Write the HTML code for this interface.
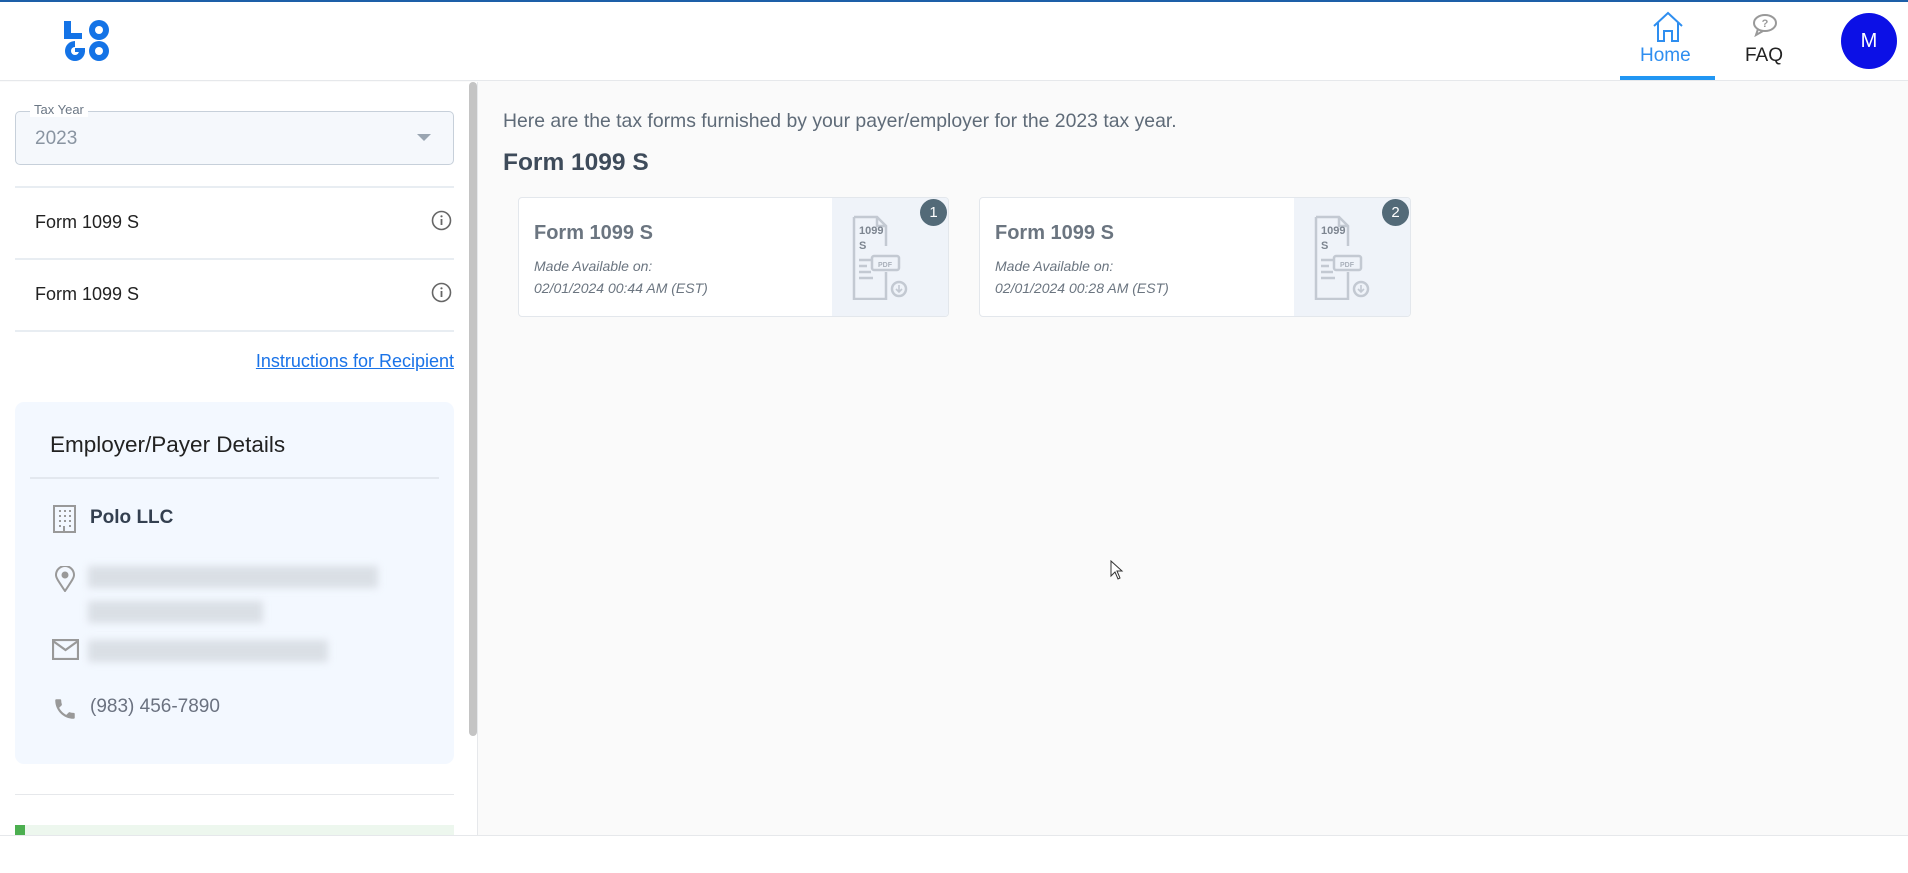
<!DOCTYPE html>
<html><head><meta charset="utf-8"><style>
*{box-sizing:border-box;margin:0;padding:0}
body{width:1908px;height:873px;overflow:hidden;background:#fafafa;font-family:"Liberation Sans",sans-serif;position:relative}
.abs{position:absolute}
</style></head><body>
<div class="abs" style="left:0;top:0;width:1908px;height:2px;background:#1d5fa8"></div>
<div class="abs" style="left:0;top:2px;width:1908px;height:79px;background:#fff;border-bottom:1px solid #e6e8eb"></div>
<svg class="abs" style="left:63px;top:20px" width="48" height="42" viewBox="0 0 48 42" fill="#1473e6"><path d="M1 1H8V13H19V19H1Z"/><circle cx="36" cy="10" r="10"/><circle cx="36" cy="10" r="4" fill="#fff"/><circle cx="12" cy="31" r="10"/><circle cx="12" cy="31" r="4" fill="#fff"/><rect x="12" y="28" width="10" height="4"/><rect x="12" y="21" width="10" height="7" fill="#fff"/><circle cx="36" cy="31" r="10"/><circle cx="36" cy="31" r="4" fill="#fff"/></svg>
<svg class="abs" style="left:1651px;top:11px" width="34" height="32" viewBox="0 0 34 32" fill="none" stroke="#2e8ef0" stroke-width="2"><path d="M3 15 L17 2 L31 15 M7 12 V30 H13 V20 H21 V30 H27 V12"/></svg>
<div class="abs" style="left:1640px;top:45px;font-size:19px;color:#2e8ef0">Home</div>
<div class="abs" style="left:1620px;top:76px;width:95px;height:4px;background:#2196f3"></div>
<svg class="abs" style="left:1752px;top:13px" width="26" height="24" viewBox="0 0 26 24" fill="none" stroke="#999" stroke-width="2"><ellipse cx="13" cy="10" rx="11" ry="8"/><path d="M6 16 L4 22 L11 18"/><text x="13" y="14" font-size="11" font-weight="bold" fill="#999" stroke="none" text-anchor="middle" font-family="Liberation Sans">?</text></svg>
<div class="abs" style="left:1745px;top:45px;font-size:19px;color:#222">FAQ</div>
<div class="abs" style="left:1841px;top:13px;width:56px;height:56px;border-radius:50%;background:#0c10e6;color:#fff;font-size:20px;text-align:center;line-height:56px">M</div>

<div class="abs" style="left:0;top:82px;width:478px;height:753px;background:#fff;border-right:1px solid #e6e8eb"></div>
<div class="abs" style="left:469px;top:82px;width:8px;height:654px;background:#c4c4c4;border-radius:4px"></div>
<div class="abs" style="left:15px;top:111px;width:439px;height:54px;border:1px solid #c7d0da;border-radius:5px;background:#f5f8fc"></div>
<div class="abs" style="left:30px;top:102px;padding:0 4px;background:#fff;font-size:13px;color:#6b7785">Tax Year</div>
<div class="abs" style="left:35px;top:128px;font-size:19px;color:#8994a1">2023</div>
<div class="abs" style="left:417px;top:134px;border-left:7px solid transparent;border-right:7px solid transparent;border-top:7px solid #9aa5b1"></div>
<div class="abs" style="left:15px;top:186px;width:439px;height:2px;background:#e8edf2"></div>
<div class="abs" style="left:35px;top:212px;font-size:18px;color:#222">Form 1099 S</div>
<svg class="abs" style="left:431px;top:210px" width="21" height="21"><circle cx="10.5" cy="10.5" r="9" fill="none" stroke="#666" stroke-width="1.6"/><path d="M10.5 9v6" stroke="#666" stroke-width="1.8"/><circle cx="10.5" cy="6.3" r="1.1" fill="#666"/></svg>
<div class="abs" style="left:15px;top:258px;width:439px;height:2px;background:#e8edf2"></div>
<div class="abs" style="left:35px;top:284px;font-size:18px;color:#222">Form 1099 S</div>
<svg class="abs" style="left:431px;top:282px" width="21" height="21"><circle cx="10.5" cy="10.5" r="9" fill="none" stroke="#666" stroke-width="1.6"/><path d="M10.5 9v6" stroke="#666" stroke-width="1.8"/><circle cx="10.5" cy="6.3" r="1.1" fill="#666"/></svg>
<div class="abs" style="left:15px;top:330px;width:439px;height:2px;background:#e8edf2"></div>
<div class="abs" style="right:1454px;top:351px;font-size:18px;color:#1a73e8;text-decoration:underline">Instructions for Recipient</div>

<div class="abs" style="left:15px;top:402px;width:439px;height:362px;background:#f3f8ff;border-radius:9px"></div>
<div class="abs" style="left:50px;top:432px;font-size:22.5px;color:#222">Employer/Payer Details</div>
<div class="abs" style="left:30px;top:477px;width:409px;height:2px;background:#e3e8ef"></div>
<svg class="abs" style="left:53px;top:505px" width="24" height="28" fill="none" stroke="#999" stroke-width="2"><rect x="1" y="1" width="21" height="26"/><path d="M6 6h2M11 6h2M16 6h2M6 11h2M11 11h2M16 11h2M6 16h2M11 16h2M16 16h2M6 21h2M16 21h2M11 21v5" /></svg>
<div class="abs" style="left:90px;top:507px;font-size:19px;font-weight:bold;color:#344050">Polo LLC</div>
<svg class="abs" style="left:55px;top:566px" width="20" height="26" fill="none" stroke="#999" stroke-width="2"><path d="M10 25 C4 16 1 12 1 9 A9 9 0 0 1 19 9 C19 12 16 16 10 25Z"/><circle cx="10" cy="9" r="2.5" fill="#999"/></svg>
<div class="abs" style="left:88px;top:566px;width:290px;height:22px;background:#d4d9df;filter:blur(4px);opacity:.8"></div>
<div class="abs" style="left:88px;top:601px;width:175px;height:22px;background:#d4d9df;filter:blur(4px);opacity:.8"></div>
<svg class="abs" style="left:52px;top:639px" width="27" height="21" fill="none" stroke="#999" stroke-width="2.2"><rect x="1" y="1" width="25" height="19"/><path d="M1 2 L13.5 11 L26 2"/></svg>
<div class="abs" style="left:88px;top:640px;width:240px;height:22px;background:#d4d9df;filter:blur(4px);opacity:.8"></div>
<svg class="abs" style="left:52px;top:696px" width="26" height="26" viewBox="0 0 24 24"><path fill="#999" d="M6.6 10.8c1.4 2.8 3.8 5.1 6.6 6.6l2.2-2.2c.3-.3.7-.4 1-.2 1.1.4 2.3.6 3.6.6.6 0 1 .4 1 1V20c0 .6-.4 1-1 1C10.6 21 3 13.4 3 4c0-.6.4-1 1-1h3.5c.6 0 1 .4 1 1 0 1.3.2 2.5.6 3.6.1.3 0 .7-.2 1L6.6 10.8z"/></svg>
<div class="abs" style="left:90px;top:696px;font-size:19px;color:#6b7280">(983) 456-7890</div>
<div class="abs" style="left:15px;top:794px;width:439px;height:1px;background:#e6e8eb"></div>
<div class="abs" style="left:15px;top:825px;width:439px;height:10px;background:#edf7ee"></div>
<div class="abs" style="left:15px;top:825px;width:10px;height:10px;background:#4caf50"></div>
<div class="abs" style="left:0;top:835px;width:1908px;height:38px;background:#fff;border-top:1px solid #e6e8eb"></div>

<div class="abs" style="left:503px;top:110px;font-size:19.4px;color:#5f6b78">Here are the tax forms furnished by your payer/employer for the 2023 tax year.</div>
<div class="abs" style="left:503px;top:149px;font-size:24.5px;font-weight:bold;color:#3e4b5a">Form 1099 S</div>

<div class="abs" style="left:518px;top:197px;width:431px;height:120px;background:#fff;border:1px solid #e3e7ec;border-radius:4px;overflow:hidden">
<div class="abs" style="right:0;top:0;width:116px;height:120px;background:#eff3f9"></div>
<div class="abs" style="left:15px;top:24px;font-size:20px;font-weight:bold;color:#6b7580">Form 1099 S</div>
<div class="abs" style="left:15px;top:57px;font-size:14px;font-style:italic;color:#6b7580;line-height:22px">Made Available on:<br>02/01/2024 00:44 AM (EST)</div>
<svg class="abs" style="left:332px;top:16px" width="60" height="86" fill="none" stroke="#c3c9d2" stroke-width="2.5"><path d="M3 3H26L35 12V32"/><path d="M35 58V85H3V3"/><path d="M26 3V12H35"/><rect x="21" y="42" width="27" height="14" rx="2"/><text x="34" y="53" font-size="7" font-weight="bold" fill="#aab1bb" stroke="none" text-anchor="middle" font-family="Liberation Sans">PDF</text><text x="8" y="20" font-size="11" font-weight="bold" fill="#7d8590" stroke="none" font-family="Liberation Sans">1099</text><text x="8" y="35" font-size="11" font-weight="bold" fill="#7d8590" stroke="none" font-family="Liberation Sans">S</text><path d="M8 46h12M8 52h8M8 58h12M8 64h14"/><circle cx="48" cy="75" r="7"/><path d="M48 71v7M45 75l3 3 3-3" stroke-width="1.6"/></svg>
</div>
<div class="abs" style="left:920px;top:199px;width:27px;height:27px;border-radius:50%;background:#536a78;color:#fff;font-size:15px;text-align:center;line-height:27px">1</div>

<div class="abs" style="left:979px;top:197px;width:432px;height:120px;background:#fff;border:1px solid #e3e7ec;border-radius:4px;overflow:hidden">
<div class="abs" style="right:0;top:0;width:116px;height:120px;background:#eff3f9"></div>
<div class="abs" style="left:15px;top:24px;font-size:20px;font-weight:bold;color:#6b7580">Form 1099 S</div>
<div class="abs" style="left:15px;top:57px;font-size:14px;font-style:italic;color:#6b7580;line-height:22px">Made Available on:<br>02/01/2024 00:28 AM (EST)</div>
<svg class="abs" style="left:333px;top:16px" width="60" height="86" fill="none" stroke="#c3c9d2" stroke-width="2.5"><path d="M3 3H26L35 12V32"/><path d="M35 58V85H3V3"/><path d="M26 3V12H35"/><rect x="21" y="42" width="27" height="14" rx="2"/><text x="34" y="53" font-size="7" font-weight="bold" fill="#aab1bb" stroke="none" text-anchor="middle" font-family="Liberation Sans">PDF</text><text x="8" y="20" font-size="11" font-weight="bold" fill="#7d8590" stroke="none" font-family="Liberation Sans">1099</text><text x="8" y="35" font-size="11" font-weight="bold" fill="#7d8590" stroke="none" font-family="Liberation Sans">S</text><path d="M8 46h12M8 52h8M8 58h12M8 64h14"/><circle cx="48" cy="75" r="7"/><path d="M48 71v7M45 75l3 3 3-3" stroke-width="1.6"/></svg>
</div>
<div class="abs" style="left:1382px;top:199px;width:27px;height:27px;border-radius:50%;background:#536a78;color:#fff;font-size:15px;text-align:center;line-height:27px">2</div>

<svg class="abs" style="left:1110px;top:560px" width="14" height="20"><path d="M1 1V16L5 12L8 19L10 18L7 11H12Z" fill="#fff" stroke="#333" stroke-width="1"/></svg>
</body></html>
